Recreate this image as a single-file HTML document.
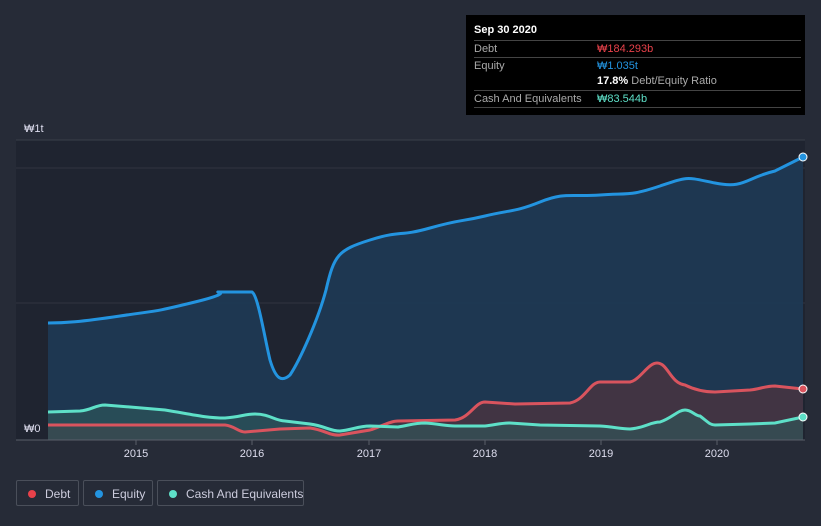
<!DOCTYPE html><html><head><style>
html,body{margin:0;width:821px;height:526px;overflow:hidden}
body{background:#262b37;font-family:"Liberation Sans",sans-serif;position:relative}
.tt{position:absolute;left:466px;top:15px;width:339px;height:100px;background:#000;color:#fff;font-size:11px}
.tt .r{position:absolute;left:8px;right:4px;border-top:1px solid #444;height:16px;line-height:16px;color:#aaa}
.lg{position:absolute;top:480px;height:26px;border:1px solid #4a4f5a;border-radius:2px;color:#ccd;font-size:12px;line-height:26px;box-sizing:border-box;white-space:nowrap}
.lg i{position:absolute;left:11px;top:9px;width:8px;height:8px;border-radius:50%}
</style></head><body>
<svg width="821" height="526" style="position:absolute;left:0;top:0">
<rect x="16" y="140" width="789" height="300" fill="#1f2430"/>
<line x1="16" y1="140" x2="805" y2="140" stroke="#3a3f4a"/>
<line x1="16" y1="168" x2="805" y2="168" stroke="#30353f"/>
<line x1="16" y1="303" x2="805" y2="303" stroke="#30353f"/>
<path d="M48,323 C64,323 80,322 120,316 S150,313 195,302 S210,292 220,292 L252,292 C258,295 265,340 270,360 C276,380 282,382 290,375 C300,360 318,320 326,290 C334,255 338,250 370,240 S398,237 430,228 S460,222 485,216 S515,212 540,202 S570,197 600,195 S630,196 660,186 S685,177 715,183 S745,178 775,171 L803,157 L803,440 L48,440Z" fill="#1e3a55" opacity=".9"/>
<path d="M48,425 L225,425 C235,426 238,432 245,432 L280,429 L310,428 C325,430 330,436 340,435 L370,430 C380,427 390,421 398,421 L455,420 C470,418 475,402 485,402 L515,404 L570,403 C585,400 590,382 600,382 L630,382 C640,380 648,363 657,363 C668,363 670,383 685,385 C695,390 705,392 715,392 L750,390 C760,389 765,386 775,386 L803,389 L803,440 L48,440Z" fill="#4a3340" opacity=".8"/>
<path d="M48,412 L80,411 C92,410 95,405 105,405 L130,407 L165,410 C190,414 205,418 225,418 C240,417 245,414 255,414 C270,414 275,421 285,421 L310,424 C325,426 330,431 340,431 C352,430 358,426 370,426 L398,427 C410,425 415,423 425,423 C440,424 445,426 455,426 L485,426 C495,425 500,423 510,423 L540,425 L600,426 C615,427 620,429 630,429 C645,428 650,422 660,422 C672,418 678,410 685,410 C692,410 695,416 700,416 C708,422 710,425 715,425 L750,424 L775,423 L803,417 L803,440 L48,440Z" fill="#2f5a5c" opacity=".6"/>
<path d="M48,323 C64,323 80,322 120,316 S150,313 195,302 S210,292 220,292 L252,292 C258,295 265,340 270,360 C276,380 282,382 290,375 C300,360 318,320 326,290 C334,255 338,250 370,240 S398,237 430,228 S460,222 485,216 S515,212 540,202 S570,197 600,195 S630,196 660,186 S685,177 715,183 S745,178 775,171 L803,157" fill="none" stroke="#2394e0" stroke-width="3"/>
<path d="M48,425 L225,425 C235,426 238,432 245,432 L280,429 L310,428 C325,430 330,436 340,435 L370,430 C380,427 390,421 398,421 L455,420 C470,418 475,402 485,402 L515,404 L570,403 C585,400 590,382 600,382 L630,382 C640,380 648,363 657,363 C668,363 670,383 685,385 C695,390 705,392 715,392 L750,390 C760,389 765,386 775,386 L803,389" fill="none" stroke="#d9545e" stroke-width="3"/>
<path d="M48,412 L80,411 C92,410 95,405 105,405 L130,407 L165,410 C190,414 205,418 225,418 C240,417 245,414 255,414 C270,414 275,421 285,421 L310,424 C325,426 330,431 340,431 C352,430 358,426 370,426 L398,427 C410,425 415,423 425,423 C440,424 445,426 455,426 L485,426 C495,425 500,423 510,423 L540,425 L600,426 C615,427 620,429 630,429 C645,428 650,422 660,422 C672,418 678,410 685,410 C692,410 695,416 700,416 C708,422 710,425 715,425 L750,424 L775,423 L803,417" fill="none" stroke="#5ee0c8" stroke-width="3"/>
<circle cx="803" cy="157" r="4" fill="#2394e0" stroke="#fff" stroke-width="1"/>
<circle cx="803" cy="389" r="4" fill="#d9545e" stroke="#fff" stroke-width="1"/>
<circle cx="803" cy="417" r="4" fill="#5ee0c8" stroke="#fff" stroke-width="1"/>
<line x1="16" y1="440" x2="805" y2="440" stroke="#5a5f6a"/>
<g stroke="#5a5f6a"><line x1="136" y1="440" x2="136" y2="445"/><line x1="252" y1="440" x2="252" y2="445"/><line x1="369" y1="440" x2="369" y2="445"/><line x1="485" y1="440" x2="485" y2="445"/><line x1="601" y1="440" x2="601" y2="445"/><line x1="717" y1="440" x2="717" y2="445"/></g>
<g fill="#dde" font-size="11" text-anchor="middle"><text x="136" y="457">2015</text><text x="252" y="457">2016</text><text x="369" y="457">2017</text><text x="485" y="457">2018</text><text x="601" y="457">2019</text><text x="717" y="457">2020</text></g>
<text x="24" y="132" fill="#dde" font-size="11">₩1t</text>
<text x="24" y="432" fill="#dde" font-size="11">₩0</text>
</svg>
<div class="tt">
<div style="position:absolute;left:8px;top:9px;font-weight:bold">Sep 30 2020</div>
<div class="r" style="top:25px">Debt<span style="position:absolute;left:123px;color:#e8414a">₩184.293b</span></div>
<div class="r" style="top:42px">Equity<span style="position:absolute;left:123px;color:#2394e0">₩1.035t</span></div>
<div class="r" style="top:58px;border-top:none">&nbsp;<span style="position:absolute;left:123px;color:#fff"><b>17.8%</b> <span style="color:#aaa">Debt/Equity Ratio</span></span></div>
<div class="r" style="top:75px">Cash And Equivalents<span style="position:absolute;left:123px;color:#5ee0c8">₩83.544b</span></div>
<div class="r" style="top:92px;height:0"></div>
</div>
<div class="lg" style="left:16px;width:63px"><i style="background:#e8414a"></i><span style="position:absolute;left:28px">Debt</span></div>
<div class="lg" style="left:83px;width:70px"><i style="background:#2394e0"></i><span style="position:absolute;left:28px">Equity</span></div>
<div class="lg" style="left:157px;width:147px"><i style="background:#5ee0c8"></i><span style="position:absolute;left:28px">Cash And Equivalents</span></div>
</body></html>
